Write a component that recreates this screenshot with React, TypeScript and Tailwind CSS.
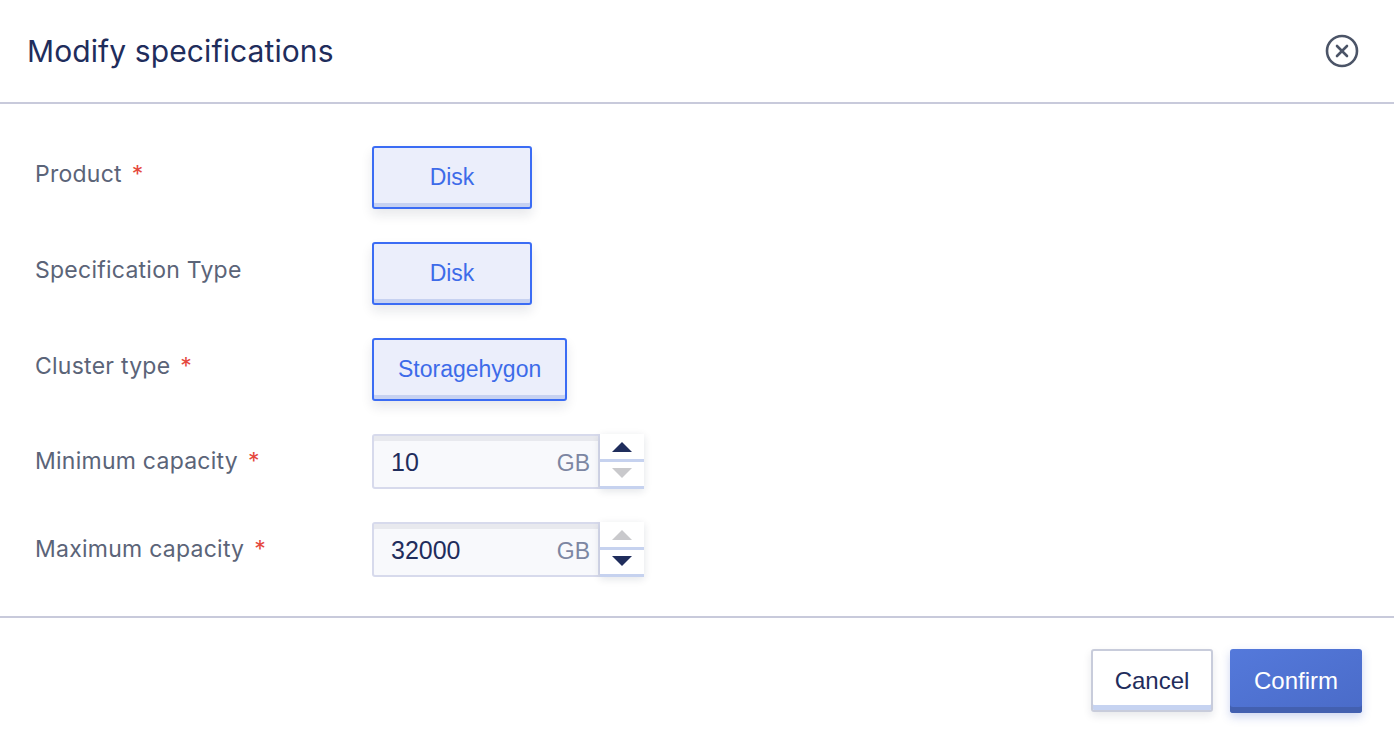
import { ReactNode } from "react";

const labelFont = { fontFamily: "Inter, 'Noto Sans', sans-serif" };

function FieldLabel({
  text,
  required,
  raised,
}: {
  text: string;
  required?: boolean;
  raised?: boolean;
}) {
  return (
    <div
      className={
        raised
          ? "w-[337px] shrink-0 pb-[6px] text-[23px] tracking-[0.25px] text-[#5b6478]"
          : "w-[337px] shrink-0 text-[23px] tracking-[0.25px] text-[#5b6478]"
      }
      style={labelFont}
    >
      {text}
      {required && <span className="ml-[10px] text-[#e5483d]">*</span>}
    </div>
  );
}

function ChoiceButton({ children }: { children: ReactNode }) {
  return (
    <button className="h-[63px] min-w-[160px] rounded-[3px] border-2 border-[#3b6cf4] bg-[#ebeefb] px-[24px] pb-[1px] text-[23px] text-[#3d6be9] shadow-[inset_0_-4px_0_#c6d1f1,0_6px_12px_rgba(20,30,60,0.10)] font-['Liberation_Sans',Arial,sans-serif]">
      {children}
    </button>
  );
}

function Stepper({ upActive }: { upActive: boolean }) {
  const dark = "#1f2d5c";
  const light = "#c9c9cc";
  return (
    <div className="flex h-full w-[44px] flex-col bg-white shadow-[0_2px_8px_rgba(20,30,60,0.12)]">
      <div className="flex flex-1 items-center justify-center border-b-[3px] border-[#c6d2ef] pt-[2px]">
        <svg width="20" height="10" viewBox="0 0 20 10">
          <polygon points="10,0 20,10 0,10" fill={upActive ? dark : light} />
        </svg>
      </div>
      <div className="flex flex-1 items-center justify-center border-b-[3px] border-[#c6d2ef] pb-[2px]">
        <svg width="20" height="10" viewBox="0 0 20 10">
          <polygon points="0,0 20,0 10,10" fill={upActive ? light : dark} />
        </svg>
      </div>
    </div>
  );
}

function CapacityInput({ value, upActive }: { value: string; upActive: boolean }) {
  return (
    <div className="flex h-[55px] font-['Liberation_Sans',Arial,sans-serif]">
      <div className="flex w-[228px] items-center justify-between rounded-l-[3px] border-2 border-[#d7daec] bg-[#f8f9fc] pl-[17px] pr-[8px] pt-[3px] shadow-[inset_0_5px_0_#e8e9ee]">
        <span className="text-[25px] text-[#1f2d5c]">{value}</span>
        <span className="text-[23px] text-[#7c86a2]">GB</span>
      </div>
      <Stepper upActive={upActive} />
    </div>
  );
}

function FormRow({
  label,
  required,
  raised,
  children,
}: {
  label: string;
  required?: boolean;
  raised?: boolean;
  children: ReactNode;
}) {
  return (
    <div className="flex items-center">
      <FieldLabel text={label} required={required} raised={raised} />
      {children}
    </div>
  );
}

export default function App() {
  return (
    <div className="flex h-[742px] w-full flex-col bg-white">
      {/* header */}
      <div className="flex h-[104px] shrink-0 items-center justify-between border-b-2 border-[#c8cadb] pl-[27px] pr-[35px]">
        <h1 className="text-[30px] tracking-[0.1px] text-[#1f2d5c]" style={labelFont}>
          Modify specifications
        </h1>
        <svg width="34" height="34" viewBox="0 0 34 34" fill="none" stroke="#4b5467" strokeWidth="2.6" strokeLinecap="round">
          <circle cx="17" cy="17" r="15" />
          <line x1="12" y1="12" x2="22" y2="22" />
          <line x1="22" y1="12" x2="12" y2="22" />
        </svg>
      </div>

      {/* body */}
      <div className="flex flex-col gap-[33px] border-b-2 border-[#c8cadb] pl-[35px] pb-[39px] pt-[42px]">
        <FormRow label="Product" required raised>
          <ChoiceButton>Disk</ChoiceButton>
        </FormRow>
        <FormRow label="Specification Type" raised>
          <ChoiceButton>Disk</ChoiceButton>
        </FormRow>
        <FormRow label="Cluster type" required raised>
          <ChoiceButton>Storagehygon</ChoiceButton>
        </FormRow>
        <FormRow label="Minimum capacity" required>
          <CapacityInput value="10" upActive={true} />
        </FormRow>
        <FormRow label="Maximum capacity" required>
          <CapacityInput value="32000" upActive={false} />
        </FormRow>
      </div>

      {/* footer */}
      <div className="flex justify-end gap-[17px] pr-[32px] pt-[31px] font-['Liberation_Sans',Arial,sans-serif]">
        <button className="h-[63px] w-[122px] rounded-[3px] border-2 border-[#c8ccdb] bg-white text-[24px] text-[#1f2d5c] shadow-[inset_0_-5px_0_#c6d3f1,0_4px_8px_rgba(20,30,60,0.10)]">
          Cancel
        </button>
        <button className="h-[64px] w-[132px] rounded-[3px] bg-gradient-to-br from-[#5479db] to-[#4a6bc8] pb-[1px] text-[24px] text-white shadow-[inset_0_-6px_0_#4360b0,0_4px_10px_rgba(60,90,200,0.25)]">
          Confirm
        </button>
      </div>
    </div>
  );
}
